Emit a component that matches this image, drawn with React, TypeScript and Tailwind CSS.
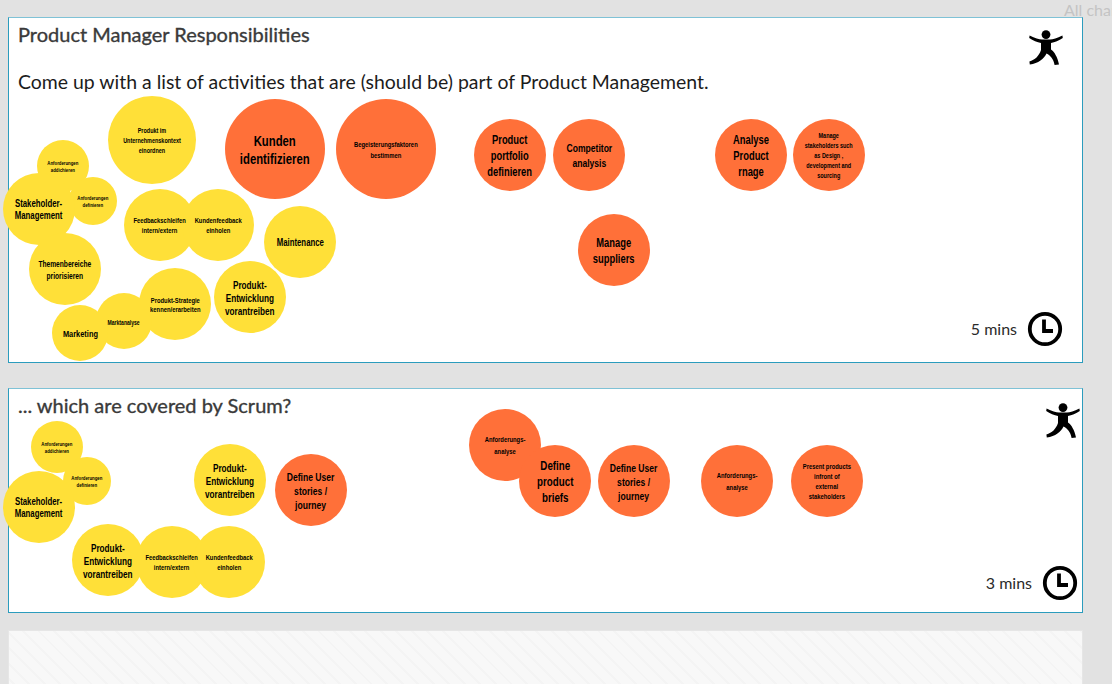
const Y = "bg-[#ffe038]";
const O = "bg-[#ff7039]";

type C = { x: number; y: number; d: number; o?: boolean; t: string[]; f: number; l: number };

const circles1: C[] = [
  { x: 108, y: 96, d: 88, t: ["Produkt im", "Unternehmenskontext", "einordnen"], f: 7, l: 10 },
  { x: 37, y: 140, d: 52, t: ["Anforderungen", "addichieren"], f: 5.5, l: 7.5 },
  { x: 69, y: 177, d: 48, t: ["Anforderungen", "definieren"], f: 5.5, l: 7.5 },
  { x: 3, y: 173, d: 72, t: ["Stakeholder-", "Management"], f: 10, l: 12.5 },
  { x: 29, y: 233, d: 72, t: ["Themenbereiche", "priorisieren"], f: 8.5, l: 12 },
  { x: 124, y: 189, d: 72, t: ["Feedbackschleifen", "intern/extern"], f: 7.5, l: 10 },
  { x: 182, y: 189, d: 72, t: ["Kundenfeedback", "einholen"], f: 7.5, l: 10 },
  { x: 264, y: 206, d: 72, t: ["Maintenance"], f: 10, l: 12 },
  { x: 214, y: 261, d: 72, t: ["Produkt-", "Entwicklung", "vorantreiben"], f: 10.5, l: 13 },
  { x: 139, y: 268, d: 72, t: ["Produkt-Strategie", "kennen/erarbeiten"], f: 7.5, l: 9.5 },
  { x: 96, y: 293, d: 56, t: ["Marktanalyse"], f: 6.5, l: 9 },
  { x: 52, y: 305, d: 56, t: ["Marketing"], f: 9.5, l: 12 },
  { x: 225, y: 99, d: 100, o: true, t: ["Kunden", "identifizieren"], f: 14.5, l: 18 },
  { x: 336, y: 99, d: 100, o: true, t: ["Begeisterungsfaktoren", "bestimmen"], f: 7.5, l: 11 },
  { x: 474, y: 119, d: 72, o: true, t: ["Product", "portfolio", "definieren"], f: 12, l: 16 },
  { x: 553, y: 119, d: 72, o: true, t: ["Competitor", "analysis"], f: 11, l: 15 },
  { x: 578, y: 214, d: 72, o: true, t: ["Manage", "suppliers"], f: 12, l: 16 },
  { x: 715, y: 119, d: 72, o: true, t: ["Analyse", "Product", "rnage"], f: 12, l: 16 },
  { x: 793, y: 119, d: 72, o: true, t: ["Manage", "stakeholders such", "as Design ,", "development and", "sourcing"], f: 7, l: 10 },
];

const circles2: C[] = [
  { x: 31, y: 421, d: 52, t: ["Anforderungen", "addichieren"], f: 5.5, l: 7.5 },
  { x: 63, y: 457, d: 48, t: ["Anforderungen", "definieren"], f: 5.5, l: 7.5 },
  { x: 3, y: 471, d: 72, t: ["Stakeholder-", "Management"], f: 10, l: 12.5 },
  { x: 194, y: 444, d: 72, t: ["Produkt-", "Entwicklung", "vorantreiben"], f: 10.5, l: 13 },
  { x: 72, y: 524, d: 72, t: ["Produkt-", "Entwicklung", "vorantreiben"], f: 10.5, l: 13 },
  { x: 136, y: 526, d: 72, t: ["Feedbackschleifen", "intern/extern"], f: 7.5, l: 10 },
  { x: 193, y: 526, d: 72, t: ["Kundenfeedback", "einholen"], f: 7.5, l: 10 },
  { x: 275, y: 454, d: 72, o: true, t: ["Define User", "stories /", "journey"], f: 11, l: 14 },
  { x: 469, y: 409, d: 72, o: true, t: ["Anforderungs-", "analyse"], f: 7.5, l: 12 },
  { x: 519, y: 445, d: 72, o: true, t: ["Define", "product", "briefs"], f: 12.5, l: 16 },
  { x: 598, y: 445, d: 72, o: true, t: ["Define User", "stories /", "journey"], f: 11, l: 14 },
  { x: 701, y: 445, d: 72, o: true, t: ["Anforderungs-", "analyse"], f: 7.5, l: 12 },
  { x: 791, y: 445, d: 72, o: true, t: ["Present products", "infront of", "external", "stakeholders"], f: 7.5, l: 10 },
];

function Bubbles({ items, top }: { items: C[]; top: number }) {
  return (
    <>
      {items.map((c, i) => (
        <div
          key={i}
          className={`absolute flex items-center justify-center rounded-full pt-[2px] text-center font-bold text-black whitespace-nowrap font-['Liberation_Sans',sans-serif] ${c.o ? O : Y}`}
          style={{ left: c.x - 9, top: c.y - top, width: c.d, height: c.d, fontSize: c.f, lineHeight: `${c.l}px` }}
        >
          <div className="relative z-10 flex scale-x-[0.78] flex-col items-center">
            {c.t.map((s) => (
              <span key={s}>{s}</span>
            ))}
          </div>
        </div>
      ))}
    </>
  );
}

function Person() {
  return (
    <svg width="34" height="36" viewBox="0 0 34 36" className="block">
      <circle cx="17" cy="4.6" r="4.4" fill="#000" />
      <path d="M0.6 5.4 C6 8 10 9.5 13 9.5 L21 9.5 C24 9.5 28 8 33.4 5.4 L33.8 8 C30 10.4 25.8 12.4 22 13 L22 19.5 C25.5 22 28.5 27 30 34.5 L25.6 35 C24.4 29 21.5 25.6 17.5 23.6 C15 29 9.5 33.4 0.8 34.6 L0.4 31.4 C6 30 10 26 12 20 L12 13 C8.2 12.4 4 10.4 0.2 8 Z" fill="#000" />
    </svg>
  );
}

function Clock() {
  return (
    <svg width="36" height="36" viewBox="0 0 36 36" className="block">
      <circle cx="18" cy="18" r="15.2" fill="none" stroke="#000" strokeWidth="3.8" />
      <path d="M17 8.5 V20 H26" fill="none" stroke="#000" strokeWidth="3.8" />
    </svg>
  );
}

export default function App() {
  return (
    <div className="relative h-[684px] w-[1112px] overflow-hidden bg-[#e2e2e2] pl-2 pt-[17px] font-['Lato','Open_Sans',sans-serif]">
      <div className="absolute left-[1064px] top-[1px] whitespace-nowrap text-[16px] leading-[18px] text-[#c4c4c4]">All changes saved</div>

      <div className="relative flex h-[346px] w-[1075px] flex-col justify-between border border-[#2b9cbd] border-t-[#7fc2d6] bg-white">
        <div className="flex justify-between pl-[9px] pr-[19px] pt-[4px]">
          <div>
            <h1 className="text-[20px] leading-[24px] text-[#3a3a3a] [-webkit-text-stroke:0.35px_#3a3a3a]">Product Manager Responsibilities</h1>
            <p className="mt-[24px] text-[19.45px] leading-[24px] text-[#1c1c1c]">Come up with a list of activities that are (should be) part of Product Management.</p>
          </div>
          <div className="pt-[8px]"><Person /></div>
        </div>
        <div className="flex items-center justify-end gap-[10px] pb-[15px] pr-[19px]">
          <span className="text-[16px] leading-5 text-[#2a2a2a]">5 mins</span>
          <Clock />
        </div>
        <Bubbles items={circles1} top={18} />
      </div>

      <div className="relative mt-[25px] flex h-[225px] w-[1075px] flex-col justify-between border border-[#2b9cbd] border-t-[#7fc2d6] bg-white">
        <div className="flex justify-between pl-[9px] pr-[2px] pt-[4px]">
          <h2 className="text-[20px] leading-[24px] text-[#3a3a3a] [-webkit-text-stroke:0.35px_#3a3a3a]">... which are covered by Scrum?</h2>
          <div className="pt-[10px]"><Person /></div>
        </div>
        <div className="flex items-center justify-end gap-[10px] pb-[11px] pr-[4px]">
          <span className="text-[16px] leading-5 text-[#2a2a2a]">3 mins</span>
          <Clock />
        </div>
        <Bubbles items={circles2} top={389} />
      </div>

      <div className="mt-[17px] h-[80px] w-[1075px] border border-[#e6e6e6] bg-[repeating-linear-gradient(45deg,#f8f8f8_0,#f8f8f8_9px,#f4f4f4_9px,#f4f4f4_11px)]" />
    </div>
  );
}
